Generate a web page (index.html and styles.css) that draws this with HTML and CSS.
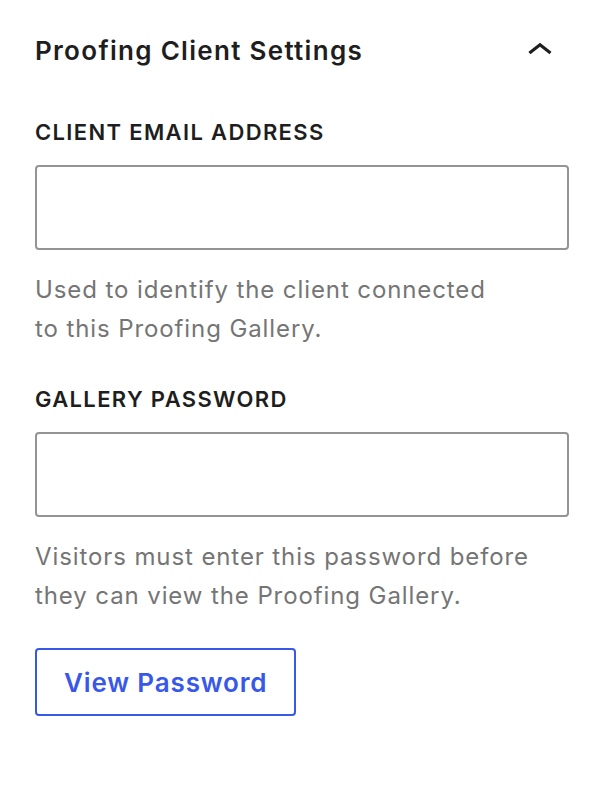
FILE: index.html
```html
<!DOCTYPE html>
<html lang="en">
<head>
<meta charset="utf-8">
<title>Proofing Client Settings</title>
<link rel="stylesheet" href="styles.css">
</head>
<body>
<div class="panel">
  <div class="panel-header">
    <h2 class="panel-title">Proofing Client Settings</h2>
    <span class="panel-toggle" aria-hidden="true">
      <svg viewBox="0 0 24 24" width="50" height="50"><path d="M6.5 12.4L12 8l5.5 4.4-.9 1.2L12 10l-4.6 3.6-1-1.2z" fill="#1e1e1e"/></svg>
    </span>
  </div>
  <div class="panel-body">
    <div class="field">
      <label class="field-label" for="email">Client Email Address</label>
      <input class="field-input" id="email" type="email">
      <p class="field-help">Used to identify the client connected<br>to this Proofing Gallery.</p>
    </div>
    <div class="field">
      <label class="field-label" for="pass">Gallery Password</label>
      <input class="field-input" id="pass" type="password">
      <p class="field-help">Visitors must enter this password before<br>they can view the Proofing Gallery.</p>
    </div>
    <button class="btn-secondary" type="button">View Password</button>
  </div>
</div>
</body>
</html>
```
FILE: styles.css
```css
* { box-sizing: border-box; }
html, body { margin: 0; padding: 0; background: #fff; }
body {
  font-family: Inter, "Noto Sans", sans-serif;
  color: #1e1e1e;
}
.panel {
  padding: 35px 31px 0 35px;
}
.panel-header {
  display: flex;
  align-items: center;
  justify-content: space-between;
  height: 32px;
}
.panel-title {
  margin: 0;
  font-size: 26px;
  line-height: 32px;
  font-weight: 600;
  letter-spacing: 1.3px;
  color: #1e1e1e;
}
.panel-toggle {
  display: flex;
  width: 50px;
  height: 50px;
  margin-right: 4px;
  align-items: center;
  justify-content: center;
}
.panel-body {
  padding-top: 53px;
}
.field-label {
  display: block;
  font-size: 22px;
  line-height: 24px;
  font-weight: 600;
  letter-spacing: 1.35px;
  text-transform: uppercase;
  color: #1e1e1e;
}
.field-input {
  display: block;
  width: 100%;
  height: 85px;
  margin-top: 21px;
  border: 2px solid #949494;
  border-radius: 4px;
  background: #fff;
  font: inherit;
}
.field-help {
  margin: 20px 0 39px;
  font-size: 24px;
  line-height: 39px;
  letter-spacing: 0.9px;
  color: #757575;
}
.field + .field .field-help { margin-bottom: 33px; }
.btn-secondary {
  display: flex;
  align-items: center;
  height: 68px;
  padding: 0 27px;
  border: 2px solid #3858e9;
  border-radius: 4px;
  background: #fff;
  color: #3858e9;
  font-family: inherit;
  font-size: 26px;
  font-weight: 600;
  letter-spacing: 0.85px;
}
```
